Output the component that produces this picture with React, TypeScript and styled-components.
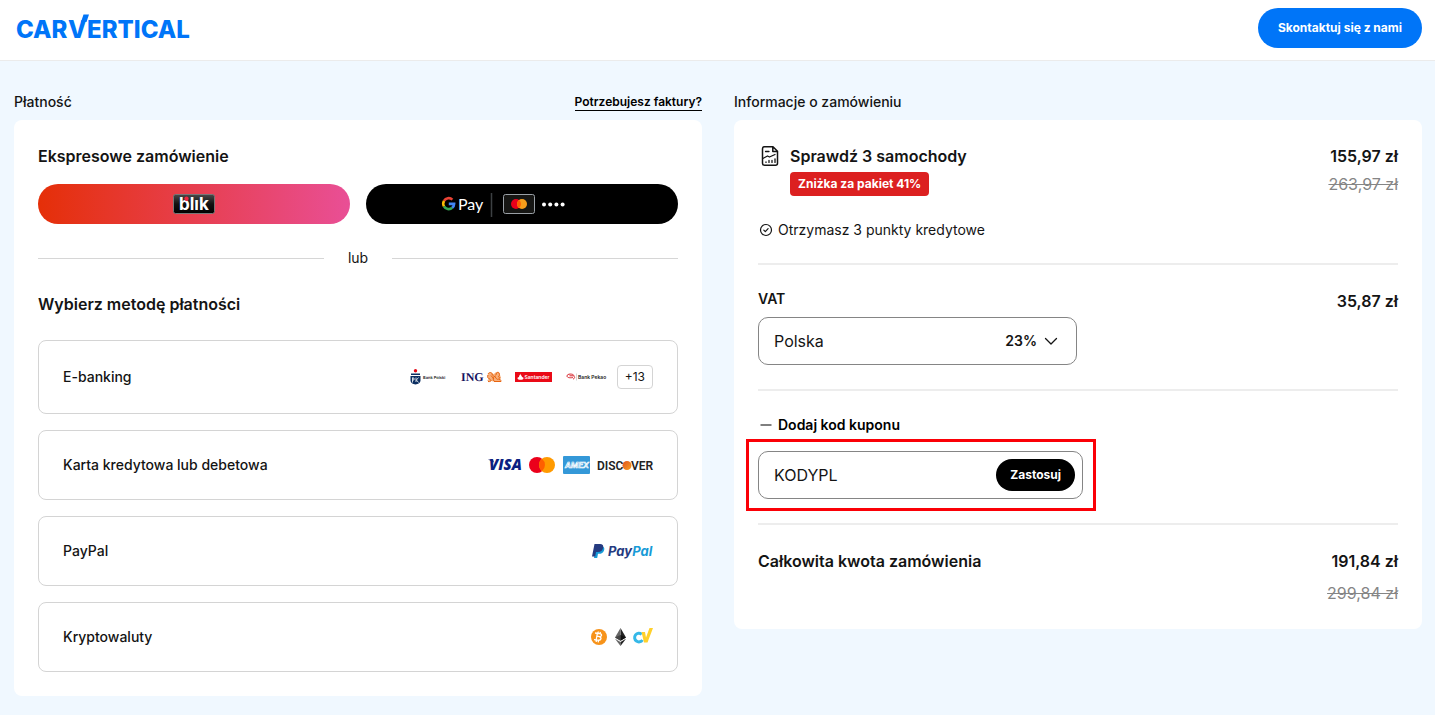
import React from 'react';
import styled, { createGlobalStyle } from 'styled-components';

const Global = createGlobalStyle`
  *, *::before, *::after { box-sizing: border-box; }
  body {
    margin: 0;
    background: #f0f8ff;
    color: #141414;
    font-family: Inter, "Liberation Sans", sans-serif;
    font-size: 14px;
    line-height: 20px;
  }
  button, input, select { font: inherit; color: inherit; }
  h1, h2, h3, p { margin: 0; font: inherit; }
  svg { overflow: visible; }
`;

const Header = styled.header`
  display: flex;
  align-items: center;
  justify-content: space-between;
  padding: 8px 13px 12px 16px;
  background: #fff;
  border-bottom: 1px solid #ebebeb;
`;

const BrandLink = styled.a`
  display: block;
  height: 36px;
  svg { display: block; }
`;

const ContactButton = styled.button`
  height: 40px;
  padding: 0 20px;
  border: 0;
  border-radius: 20px;
  background: #0075f8;
  color: #fff;
  font-size: 12px;
  font-weight: 700;
`;

const Main = styled.main`
  display: grid;
  grid-template-columns: 1fr 1fr;
  gap: 32px;
  align-items: start;
  padding: 31px 13px 19px 14px;
`;

const SectionHead = styled.div`
  display: flex;
  justify-content: space-between;
  align-items: center;
  margin-bottom: 8px;
`;

const SectionTitle = styled.h2`
  font-weight: 500;
`;

const InvoiceLink = styled.a`
  color: #000;
  font-size: 12px;
  line-height: 16px;
  font-weight: 600;
  text-decoration: none;
  border-bottom: 1px solid #000;
`;

const Card = styled.div`
  padding: 24px;
  border-radius: 8px;
  background: #fff;
`;

const Heading = styled.h3`
  font-size: 16px;
  line-height: 24px;
  font-weight: 600;
`;

const ExpressRow = styled.div`
  display: grid;
  grid-template-columns: 1fr 1fr;
  gap: 16px;
  margin: 16px 0 24px;
`;

const ExpressButton = styled.button<{ $bg: string }>`
  display: flex;
  align-items: center;
  justify-content: center;
  height: 40px;
  padding: 0;
  border: 0;
  border-radius: 20px;
  background: ${(p) => p.$bg};
`;

const OrLine = styled.div`
  display: flex;
  align-items: center;
  gap: 24px;
  margin-bottom: 24px;
  &::before, &::after {
    content: "";
    flex: 1;
    height: 1px;
    background: #d6d6d6;
  }
`;

const MethodList = styled.div`
  display: flex;
  flex-direction: column;
  gap: 16px;
  margin-top: 24px;
`;

const Method = styled.button`
  display: flex;
  align-items: center;
  justify-content: space-between;
  padding: 24px;
  border: 1px solid #d4d4d4;
  border-radius: 8px;
  background: #fff;
  font-weight: 500;
  text-align: left;
`;

const Logos = styled.span`
  display: flex;
  align-items: center;
  gap: 14px;
  svg { display: block; flex: none; }
`;

const More = styled.span`
  height: 24px;
  margin-left: -4px;
  padding: 0 7px;
  border: 1px solid #d4d4d4;
  border-radius: 4px;
  font-size: 12px;
  line-height: 22px;
  font-weight: 400;
`;

const Row = styled.div`
  display: flex;
  justify-content: space-between;
  align-items: flex-start;
`;

const Product = styled.div`
  display: grid;
  grid-template-columns: 24px auto;
  column-gap: 8px;
  row-gap: 4px;
`;

const Badge = styled.span`
  grid-column: 2;
  justify-self: start;
  padding: 0 8px;
  border-radius: 4px;
  background: #dc2020;
  color: #fff;
  font-size: 12px;
  line-height: 24px;
  font-weight: 700;
`;

const Prices = styled.div<{ $gap: number }>`
  display: flex;
  flex-direction: column;
  gap: ${(p) => p.$gap}px;
  font-size: 16px;
  line-height: 24px;
  font-weight: 600;
  text-align: right;
`;

const OldPrice = styled.s`
  color: #858585;
  font-weight: 400;
`;

const Perk = styled.p`
  display: flex;
  align-items: center;
  gap: 4px;
  margin: 24px 0 23px;
  font-weight: 400;

  & + hr { margin-top: 0; }
`;

const Rule = styled.hr`
  height: 2px;
  margin: 24px 0;
  border: 0;
  background: #ededed;
`;

const FieldLabel = styled.label`
  display: block;
  margin-bottom: 8px;
  font-weight: 600;
`;

const SelectWrap = styled.div`
  position: relative;
  width: 319px;
  font-size: 16px;
`;

const CountrySelect = styled.select`
  display: block;
  width: 100%;
  height: 48px;
  padding: 0 88px 0 15px;
  border: 1px solid #858585;
  border-radius: 10px;
  background: #fff;
  appearance: none;
`;

const Rate = styled.span`
  position: absolute;
  top: 0;
  right: 16px;
  display: flex;
  align-items: center;
  gap: 4px;
  height: 48px;
  font-size: 14px;
  font-weight: 600;
  pointer-events: none;
`;

const CouponToggle = styled.button`
  display: flex;
  align-items: center;
  gap: 4px;
  padding: 0;
  border: 0;
  background: none;
  color: #000;
  font-weight: 600;
`;

const CouponArea = styled.form`
  width: 350px;
  margin: 4px 0 -12px -12px;
  padding: 9px 10px 9px 9px;
  border: 3px solid #fb0007;
`;

const CouponField = styled.div`
  display: flex;
  align-items: center;
  height: 48px;
  padding: 0 7px 0 15px;
  border: 1px solid #858585;
  border-radius: 10px;
`;

const CouponInput = styled.input`
  flex: 1;
  min-width: 0;
  padding: 0;
  border: 0;
  outline: 0;
  background: none;
  font-size: 16px;
`;

const ApplyButton = styled.button`
  height: 32px;
  padding: 0 14px;
  border: 0;
  border-radius: 16px;
  background: #000;
  color: #fff;
  font-size: 12px;
  font-weight: 700;
`;

const Brand = () => (
  <svg width="180" height="36" viewBox="0 0 180 36" fill="#0075f8" role="img" aria-label="carVertical">
    <text y="28" fontSize="24" fontWeight="800">
      <tspan x="0">CAR</tspan><tspan x="52">V</tspan><tspan x="71">ERTICAL</tspan>
    </text>
    <path d="M65 12 67.500 4.500H73L70.500 12z" />
  </svg>
);

const Blik = () => (
  <svg width="42" height="20" viewBox="0 0 42 20" role="img" aria-label="blik">
    <defs>
      <linearGradient id="blikbg" x1="0" y1="0" x2="0" y2="1">
        <stop offset="0" stopColor="#4a4a4a" />
        <stop offset=".5" stopColor="#111" />
        <stop offset="1" stopColor="#000" />
      </linearGradient>
    </defs>
    <rect x=".5" y=".5" width="41" height="19" rx="2" fill="url(#blikbg)" stroke="#777" />
    <text x="6" y="16" fontSize="17" fontWeight="700" fill="#fff">blık</text>
    <circle cx="13.500" cy="4.800" r="2.200" fill="#f0243f" />
  </svg>
);

const GooglePay = () => (
  <svg width="163" height="26" viewBox="0 0 163 26" role="img" aria-label="Google Pay">
    <g fill="none" strokeWidth="2.600">
      <path d="M11.400 8.600A5.400 5.400 0 0 0 3 9.900" stroke="#ea4335" />
      <path d="M3 9.900a5.400 5.400 0 0 0 0 5.400" stroke="#fbbc04" />
      <path d="M3 15.300a5.400 5.400 0 0 0 8.200 1.500" stroke="#34a853" />
      <path d="M11.200 16.800a5.200 5.200 0 0 0 1.900-3.900H7.800" stroke="#4285f4" />
    </g>
    <text x="17" y="19" fontSize="16" fill="#fff" fontFamily="Lato">Pay</text>
    <path d="M50.500 2v24" stroke="#3c4043" strokeWidth="1.500" />
    <rect x="62.500" y="3.500" width="31" height="19" rx="2" fill="#161614" stroke="#9aa0a6" />
    <circle cx="75" cy="13" r="5" fill="#eb001b" />
    <circle cx="81" cy="13" r="5" fill="#f79e1b" />
    <path d="M78 9a5 5 0 0 1 0 8 5 5 0 0 1 0-8z" fill="#ff5f00" />
    <g fill="#fff">
      <circle cx="103" cy="13.500" r="2" /><circle cx="109.200" cy="13.500" r="2" />
      <circle cx="115.400" cy="13.500" r="2" /><circle cx="121.600" cy="13.500" r="2" />
    </g>
  </svg>
);

const BankPolski = () => (
  <svg width="37" height="16" viewBox="-1 0 37 16" role="img" aria-label="PKO Bank Polski">
    <circle cx="5.500" cy="1.800" r="1.700" fill="#e30713" />
    <path d="M1 4.500h9v1.500H1zM.5 7h10v4.500c0 2.500-2.500 3.500-5 4-2.500-.5-5-1.500-5-4z" fill="#0c2f61" />
    <path d="M2.500 8.500v5M2.500 9h1.500v2H2.500M6 8.500V13M8.500 8.500 6.400 11l2.100 2.500" stroke="#fff" fill="none" strokeWidth=".8" />
    <text x="13" y="10" fontSize="4" fontWeight="600" fill="#222" textRendering="geometricPrecision">Bank Polski</text>
  </svg>
);

const Ing = () => (
  <svg width="41" height="12" viewBox="0 0 41 12" role="img" aria-label="ING">
    <text x="1" y="10" fontSize="12" fontWeight="700" fill="#16135f" fontFamily="Liberation Serif" textRendering="geometricPrecision">ING</text>
    <path d="M28 3c1-2 4-2 5 0 2 0 2-2 4-2s3 1 3 3c1 2 1 4 0 5l1 1.500h-8c-2-1-4 0-6-1 1-1 2-1 2-2-2-1-2-3-1-4.500z" fill="#f7b07c" />
    <g fill="none" stroke="#e8640f" strokeWidth="1">
      <path d="M28 3c1-2 4-2 4 0s3 2 4 4 3 2 4-1M28 4c-1 2 0 4 2 4M28 10.500c3 .5 4-1 2-2M34 10c-2-3 0-5 2-5M34 10.500h7c0-1 0-2-2-2M36 4c0-2 2-4 3-2s0 4-1 4" />
      <path d="M31 4.500 34 8" />
    </g>
  </svg>
);

const Santander = () => (
  <svg width="37" height="10" viewBox="0 0 37 10" role="img" aria-label="Santander">
    <rect width="37" height="10" fill="#ea0a17" />
    <path d="M5.500 1.500c-.5 1.500 1.500 2 1.500 3.500 1 .2 1.500.7 1.500 1.200 0 1-1.500 1.500-3 1.500s-3-.5-3-1.500c0-.6.500-1 1.500-1.200C4 3.500 5 3 5.500 1.500z" fill="#fff" />
    <text x="9.500" y="7" fontSize="5" fontWeight="600" fill="#fff">Santander</text>
  </svg>
);

const Pekao = () => (
  <svg width="41" height="10" viewBox="0 0 41 10" role="img" aria-label="Bank Pekao">
    <path d="M8 3.500C7 1.500 1 1.500 1 4c0 2 4 2 6 1.500M3.500 3.800h4c2 1.200 1 3-.5 3.200" stroke="#d8232a" fill="none" />
    <path d="M10.500 1.500v7" stroke="#bbb" strokeWidth=".6" />
    <text x="12" y="7" fontSize="5" fontWeight="600" fill="#222">Bank Pekao</text>
  </svg>
);

const Cards = () => (
  <svg width="166" height="20" viewBox="0 0 166 20" role="img" aria-label="Visa, Mastercard, American Express, Discover">
    <defs>
      <linearGradient id="disc" x1="0" y1="0" x2="1" y2="1">
        <stop offset="0" stopColor="#e0531f" /><stop offset="1" stopColor="#f9a021" />
      </linearGradient>
    </defs>
    <text x="2" y="15" fontSize="15" fontWeight="800" fontStyle="italic" fill="#0b1f81" fontFamily="Open Sans">VISA</text>
    <path d="M1 4.500h5l1 3z" fill="#0b1f81" />
    <circle cx="50" cy="10" r="8" fill="#eb001b" />
    <circle cx="60" cy="10" r="8" fill="#ff9a00" />
    <path d="M55 3.800a8 8 0 0 1 0 12.400 8 8 0 0 1 0-12.400z" fill="#ff5f00" />
    <rect x="76" y="1" width="27" height="18" rx="1" fill="#3498d8" />
    <text x="78" y="13" fontSize="8" fontWeight="600" fontStyle="italic" fill="#3498d8" stroke="#fff" strokeWidth=".7">AMEX</text>
    <text x="110" y="15" fontSize="12" fontWeight="600" fill="#222" fontFamily="Roboto">DISC</text>
    <text x="144" y="15" fontSize="12" fontWeight="600" fill="#222" fontFamily="Roboto">VER</text>
    <circle cx="140" cy="10.500" r="4.500" fill="url(#disc)" />
  </svg>
);

const PayPal = () => (
  <svg width="62" height="18" viewBox="0 0 62 18" role="img" aria-label="PayPal">
    <path d="M5 5h7.500c1 .8 1 2 .5 3.500-.8 2.500-2.500 3.300-5 3.300H7L6.200 16H3z" fill="#179bd7" />
    <path d="M3.500 2H9c2.500 0 3.800 1.300 3.200 3.800C11.600 8.600 9.800 10 7 10H5l-.8 4.500H1z" fill="#253b80" />
    <text x="17" y="14" fontSize="13" fontWeight="700" fontStyle="italic" fill="#253b80">Pay<tspan fill="#179bd7">Pal</tspan></text>
  </svg>
);

const Crypto = () => (
  <svg width="64" height="20" viewBox="0 0 64 20" role="img" aria-label="Bitcoin, Ethereum, carVertical">
    <circle cx="10" cy="10" r="8" fill="#f7931a" />
    <path d="M8.500 5.500 7 14M6 6l4.500.7c3 .5 2.500 3-.2 2.900L8 9.200M9.800 9.600c3.500.6 2.500 4-.8 3.600l-4-.6M9.300 4.500l-.3 2M11.300 4.800l-.3 2M7.500 13l-.3 2M9.500 13.300l-.3 2" stroke="#fff" strokeWidth="1.300" fill="none" />
    <path d="m31.500 1 5.500 9.500-5.500 3.200z" fill="#222" />
    <path d="m31.500 1-5.500 9.500 5.500 3.200z" fill="#666" />
    <path d="M31.500 8v5.700L26 10.500z" fill="#444" /><path d="M31.500 8v5.700l5.500-3.200z" fill="#111" />
    <path d="m26 11.700 5.500 3.200V19z" fill="#666" /><path d="m37 11.700-5.500 3.200V19z" fill="#222" />
    <path d="M52.700 7.300A4.300 4.300 0 1 0 53.500 13" stroke="#35b8e8" strokeWidth="3" fill="none" />
    <path d="M52.500 5H56l1 5.500L60.500 1H64l-5.500 14.500h-3.500z" fill="#ffd02b" />
  </svg>
);

const ReportIcon = () => (
  <svg width="24" height="24" viewBox="0 0 24 24" fill="none" stroke="#141414" strokeWidth="1.500" strokeLinecap="round" strokeLinejoin="round">
    <path d="M15 2.800H6.500a2 2 0 0 0-2 2v14.400a2 2 0 0 0 2 2h11a2 2 0 0 0 2-2V7.300zM14.800 3v4.500h4.500" />
    <path d="M7.500 7.500H11M4.800 14.500l4.700-2.500 2 1 5.500-2.500M8 18v.4M11 16.500v1.900M14 16.500v1.900M17 14.800v3.600" strokeWidth="1.300" />
  </svg>
);

const CheckIcon = () => (
  <svg width="16" height="16" viewBox="0 0 16 16" fill="none" stroke="#141414" strokeWidth="1.200" strokeLinecap="round" strokeLinejoin="round">
    <circle cx="8" cy="8" r="5.500" />
    <path d="m5.800 8.200 1.500 1.500 2.800-3" />
  </svg>
);

const methods: { name: string; logos: React.ReactNode }[] = [
  { name: 'E-banking', logos: <><BankPolski /><Ing /><Santander /><Pekao /><More>+13</More></> },
  { name: 'Karta kredytowa lub debetowa', logos: <Cards /> },
  { name: 'PayPal', logos: <PayPal /> },
  { name: 'Kryptowaluty', logos: <Crypto /> },
];

export default function App() {
  return (
    <>
      <Global />
      <Header>
        <BrandLink href="#"><Brand /></BrandLink>
        <ContactButton>Skontaktuj się z nami</ContactButton>
      </Header>
      <Main>
        <section>
          <SectionHead>
            <SectionTitle>Płatność</SectionTitle>
            <InvoiceLink href="#">Potrzebujesz faktury?</InvoiceLink>
          </SectionHead>
          <Card>
            <Heading>Ekspresowe zamówienie</Heading>
            <ExpressRow>
              <ExpressButton $bg="linear-gradient(90deg, #e52f08, #e94f96)"><Blik /></ExpressButton>
              <ExpressButton $bg="#000"><GooglePay /></ExpressButton>
            </ExpressRow>
            <OrLine>lub</OrLine>
            <Heading>Wybierz metodę płatności</Heading>
            <MethodList>
              {methods.map((m) => (
                <Method key={m.name}>
                  {m.name}
                  <Logos>{m.logos}</Logos>
                </Method>
              ))}
            </MethodList>
          </Card>
        </section>
        <section>
          <SectionHead>
            <SectionTitle>Informacje o zamówieniu</SectionTitle>
          </SectionHead>
          <Card>
            <Row>
              <Product>
                <ReportIcon />
                <Heading>Sprawdź 3 samochody</Heading>
                <Badge>Zniżka za pakiet 41%</Badge>
              </Product>
              <Prices $gap={4}>
                <span>155,97 zł</span>
                <OldPrice>263,97 zł</OldPrice>
              </Prices>
            </Row>
            <Perk><CheckIcon />Otrzymasz 3 punkty kredytowe</Perk>
            <Rule />
            <Row>
              <div>
                <FieldLabel htmlFor="country">VAT</FieldLabel>
                <SelectWrap>
                  <CountrySelect id="country" defaultValue="PL">
                    <option value="PL">Polska</option>
                  </CountrySelect>
                  <Rate>
                    23%
                    <svg width="20" height="20" viewBox="0 0 20 20" fill="none" stroke="#141414" strokeWidth="1.300" strokeLinecap="round" strokeLinejoin="round">
                      <path d="m4.500 7.500 5.500 5.500 5.500-5.500" />
                    </svg>
                  </Rate>
                </SelectWrap>
              </div>
              <Prices $gap={0}>35,87 zł</Prices>
            </Row>
            <Rule />
            <CouponToggle type="button">
              <svg width="16" height="16" viewBox="0 0 16 16"><path d="M2.500 8h11" stroke="#555" strokeWidth="1.500" /></svg>
              Dodaj kod kuponu
            </CouponToggle>
            <CouponArea onSubmit={(e) => e.preventDefault()}>
              <CouponField>
                <CouponInput aria-label="Kod kuponu" defaultValue="KODYPL" />
                <ApplyButton>Zastosuj</ApplyButton>
              </CouponField>
            </CouponArea>
            <Rule />
            <Row>
              <Heading>Całkowita kwota zamówienia</Heading>
              <Prices $gap={8}>
                <span>191,84 zł</span>
                <OldPrice>299,84 zł</OldPrice>
              </Prices>
            </Row>
          </Card>
        </section>
      </Main>
    </>
  );
}
